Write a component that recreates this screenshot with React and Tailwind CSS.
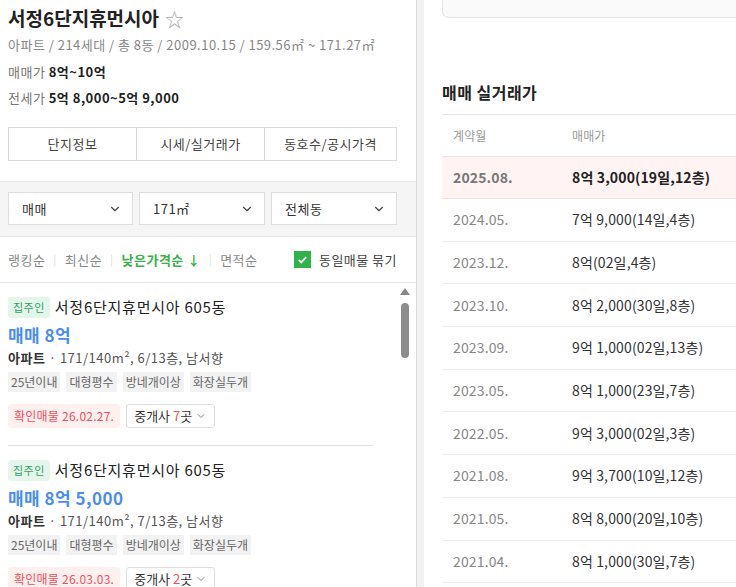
import { ChevronDown } from 'lucide-react'

const font = { fontFamily: '"Noto Sans CJK KR", "Noto Sans", sans-serif' }

const deals = [
  ['2024.05.', '7억 9,000(14일,4층)'],
  ['2023.12.', '8억(02일,4층)'],
  ['2023.10.', '8억 2,000(30일,8층)'],
  ['2023.09.', '9억 1,000(02일,13층)'],
  ['2023.05.', '8억 1,000(23일,7층)'],
  ['2022.05.', '9억 3,000(02일,3층)'],
  ['2021.08.', '9억 3,700(10일,12층)'],
  ['2021.05.', '8억 8,000(20일,10층)'],
  ['2021.04.', '8억 1,000(30일,7층)'],
]

const listings = [
  { price: '매매 8억', floor: '6/13층', date: '26.02.27.', agents: 7 },
  { price: '매매 8억 5,000', floor: '7/13층', date: '26.03.03.', agents: 2 },
]

function Listing({ item, last }) {
  return (
    <div className={`pt-[14px] ${last ? '' : 'pb-[17px] border-b border-[#e2e2e2]'}`}>
      <div className="flex items-center gap-[5px] h-[21px]">
        <span className="rounded-[3px] bg-[#e4f6ec] px-[5px] text-[11px] leading-[21px] text-[#2f9e5c]">집주인</span>
        <span className="text-[15px] tracking-[0.05em] text-[#222]">서정6단지휴먼시아 605동</span>
      </div>
      <div className="mt-[5px] text-[17px] font-bold leading-[24px] text-[#4a8df0]">{item.price}</div>
      <div className="text-[13px] leading-[22px] text-[#555]">
        <span className="font-bold text-[#333]">아파트</span> · 171/140m², {item.floor}, 남서향
      </div>
      <div className="mt-[3px] flex gap-[6px] tracking-normal">
        {['25년이내', '대형평수', '방네개이상', '화장실두개'].map((t) => (
          <span key={t} className="bg-[#f2f2f2] px-[3px] text-[12px] leading-[20px] text-[#666]">{t}</span>
        ))}
      </div>
      <div className="mt-[12px] flex items-center gap-[6px] tracking-normal">
        <span className="rounded-[3px] bg-[#fff0f0] px-[6px] text-[12px] leading-[24px] tracking-[0.02em] text-[#f0505a]">확인매물 {item.date}</span>
        <span className="flex items-center rounded-[3px] border border-[#ddd] px-[7px] text-[13px] leading-[22px] text-[#333]">
          중개사&nbsp;<span className="text-[#f0505a]">{item.agents}</span>곳
          <ChevronDown size={12} strokeWidth={1.5} className="ml-[3px] text-[#666]" />
        </span>
      </div>
    </div>
  )
}

export default function App() {
  return (
    <div className="flex h-[587px] w-[736px] overflow-hidden bg-white tracking-[0.03em]" style={font}>
      <aside className="flex w-[417px] shrink-0 flex-col border-r border-[#dcdcdc]">
        <div className="px-[8px] pt-[5px]">
          <div className="flex h-[26px] items-center gap-[6px]">
            <h1 className="text-[19px] font-bold tracking-normal text-[#222]">서정6단지휴먼시아</h1>
            <span className="text-[19px] text-[#aaa] leading-none">☆</span>
          </div>
          <p className="mt-[3px] text-[13px] leading-[22px] text-[#888]">
            아파트 / 214세대 / 총 8동 / 2009.10.15 / 159.56㎡ ~ 171.27㎡
          </p>
          <p className="mt-[5px] text-[13px] leading-[22px] text-[#777]">
            매매가 <span className="font-bold text-[#222]">8억~10억</span>
          </p>
          <p className="mt-[4px] text-[13px] leading-[22px] text-[#777]">
            전세가 <span className="font-bold text-[#222]">5억 8,000~5억 9,000</span>
          </p>
          <div className="mt-[18px] grid h-[34px] w-[389px] grid-cols-[128px_128px_1fr] border border-[#d9d9d9] text-[13px] text-[#444]">
            <div className="flex items-center justify-center border-r border-[#d9d9d9]">단지정보</div>
            <div className="flex items-center justify-center border-r border-[#d9d9d9]">시세/실거래가</div>
            <div className="flex items-center justify-center">동호수/공시가격</div>
          </div>
        </div>
        <div className="mt-[20px] flex h-[56px] gap-[6px] border-y border-[#e6e6e6] bg-[#f5f5f5] px-[8px] pt-[10px]">
          {[['매매', 125], ['171㎡', 126], ['전체동', 126]].map(([t, w]) => (
            <div key={t} style={{ width: w }} className="flex h-[33px] items-center justify-between border border-[#dcdcdc] bg-white pl-[13px] pr-[10px] text-[13px] text-[#333]">
              {t}
              <ChevronDown size={14} strokeWidth={2} className="text-[#444]" />
            </div>
          ))}
        </div>
        <div className="flex h-[46px] items-center justify-between border-b border-[#e6e6e6] px-[8px] text-[13px]">
          <div className="flex items-center gap-[8px] text-[#888]">
            <span>랭킹순</span>
            <span className="text-[#ddd] text-[11px]">|</span>
            <span>최신순</span>
            <span className="text-[#ddd] text-[11px]">|</span>
            <span className="font-bold text-[#3cb049]">낮은가격순 ↓</span>
            <span className="text-[#ddd] text-[11px]">|</span>
            <span>면적순</span>
          </div>
          <div className="mr-[11px] flex items-center gap-[8px] text-[#444]">
            <span className="flex h-[17px] w-[17px] items-center justify-center bg-[#2fb34a]">
              <svg width="11" height="11" viewBox="0 0 12 12" fill="none" stroke="white" strokeWidth="2">
                <path d="M2 6.5l2.6 2.6L10 3.5" />
              </svg>
            </span>
            동일매물 묶기
          </div>
        </div>
        <div className="flex min-h-0 flex-1">
          <div className="w-[373px] pl-[8px]">
            {listings.map((l, i) => (
              <Listing key={i} item={l} last={i === listings.length - 1} />
            ))}
          </div>
          <div className="ml-auto mr-[6px] flex w-[10px] flex-col items-center pt-[5px]">
            <svg width="10" height="7" viewBox="0 0 10 7"><path d="M5 0L10 7H0z" fill="#888" /></svg>
            <div className="mt-[8px] h-[55px] w-[8px] rounded-full bg-[#8c8c8c]" />
          </div>
        </div>
      </aside>
      <div className="w-[7px] shrink-0 bg-[#f2f2f2]" />
      <main className="min-w-0 flex-1 pl-[18px]">
        <div className="h-[18px] w-[320px] rounded-bl-[7px] border-b border-l border-[#e3e3e3] bg-[#fafafa]" />
        <h2 className="mt-[63px] text-[16px] font-bold leading-[22px] text-[#222]">매매 실거래가</h2>
        <div className="mt-[11px] w-[320px] border-t border-[#e3e3e3] text-[14px] tracking-[0.01em]">
          <div className="flex h-[41px] items-center text-[12px] text-[#999]">
            <span className="w-[130px] pl-[11px]">계약월</span>
            <span>매매가</span>
          </div>
          <div className="flex h-[43px] items-center border-y border-[#fadede] bg-[#fff3f3] font-bold">
            <span className="w-[130px] pl-[11px] text-[#777]">2025.08.</span>
            <span className="text-[#222]">8억 3,000(19일,12층)</span>
          </div>
          {deals.map(([d, p]) => (
            <div key={d} className="flex h-[42.7px] items-center border-b border-[#ececec]">
              <span className="w-[130px] pl-[11px] text-[#888]">{d}</span>
              <span className="text-[#333]">{p}</span>
            </div>
          ))}
        </div>
      </main>
    </div>
  )
}
